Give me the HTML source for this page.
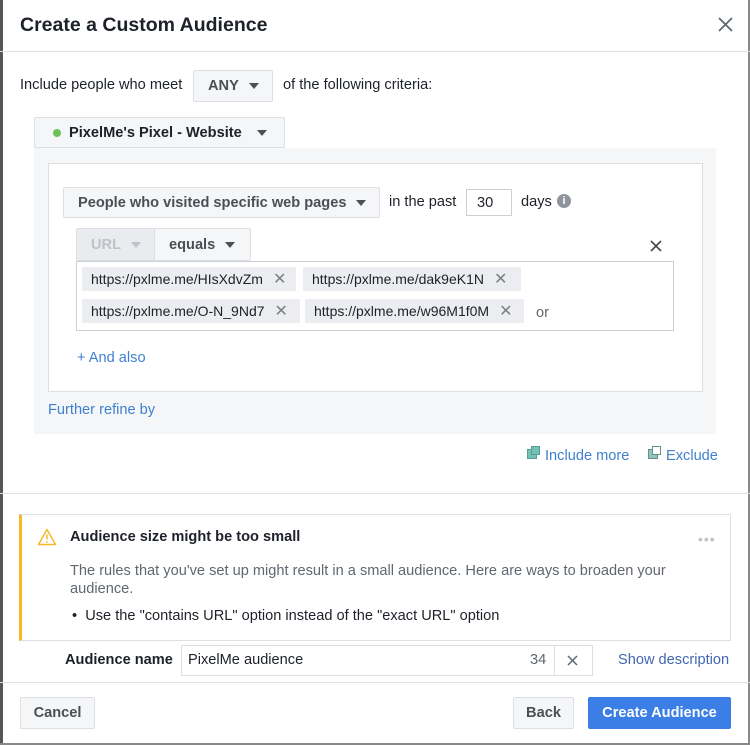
<!DOCTYPE html>
<html><head><meta charset="utf-8"><style>
*{box-sizing:border-box;margin:0;padding:0}
body{width:750px;height:745px;background:#fff;font-family:"Liberation Sans",sans-serif;font-size:14.6px;color:#1d2129;position:relative;overflow:hidden}
.a{position:absolute;white-space:nowrap}
.btn{position:absolute;background:#f5f6f7;border:1px solid #dddfe2;border-radius:2px;font-weight:bold;color:#4b4f56;display:flex;align-items:center}
.tri{display:inline-block;width:0;height:0;border-left:5px solid transparent;border-right:5px solid transparent;border-top:6px solid #4b4f56;margin-left:10px}
.tag{position:absolute;background:#ebedf0;border-radius:2px;height:24px;display:flex;align-items:center;padding-left:9px;color:#1d2129;font-size:14px}
.tag span{color:#7f7f7f;margin-left:10px;font-size:16px}
.blue{color:#4080d0}
</style></head><body>
<div class="a" style="left:0;top:0;width:3px;height:745px;background:#555"></div>
<div class="a" style="right:0;top:0;width:2px;height:745px;background:#888"></div>
<div class="a" style="left:20px;top:14px;font-size:19.5px;font-weight:bold">Create a Custom Audience</div>
<svg class="a" style="left:718px;top:17px" width="15" height="15"><path d="M1 1L14 14M14 1L1 14" stroke="#606770" stroke-width="1.8"/></svg>
<div class="a" style="left:0;top:51px;width:750px;height:1px;background:#dddfe2"></div>

<div class="a" style="left:20px;top:77px;color:#1d2129">Include people who meet</div>
<div class="btn" style="left:193px;top:70px;width:80px;height:32px;padding-left:14px">ANY<i class="tri"></i></div>
<div class="a" style="left:283px;top:77px">of the following criteria:</div>

<div class="btn" style="left:34px;top:117px;width:251px;height:31px;padding-left:18px;color:#1d2129"><i style="width:8px;height:8px;border-radius:50%;background:#6ac259;margin-right:8px;display:inline-block"></i>PixelMe's Pixel - Website<i class="tri" style="margin-left:15px"></i></div>
<div class="a" style="left:34px;top:148px;width:682px;height:286px;background:#f5f6f7"></div>
<div class="a" style="left:48px;top:163px;width:655px;height:229px;background:#fff;border:1px solid #dddfe2"></div>

<div class="btn" style="left:63px;top:187px;width:317px;height:31px;padding-left:14px">People who visited specific web pages<i class="tri" style="margin-left:10px"></i></div>
<div class="a" style="left:389px;top:194px">in the past</div>
<div class="a" style="left:466px;top:189px;width:46px;height:27px;border:1px solid #ccd0d5;padding:5px 0 0 10px">30</div>
<div class="a" style="left:521px;top:194px">days</div>
<div class="a" style="left:557px;top:194px;width:14px;height:14px;border-radius:50%;background:#90949c;color:#fff;font-size:11px;font-weight:bold;text-align:center;line-height:14px">i</div>

<div class="btn" style="left:76px;top:228px;width:175px;height:33px;background:#fff;padding:0"><div style="width:78px;height:31px;background:#e9ebee;color:#bec3c9;display:flex;align-items:center;padding-left:14px;border-right:1px solid #dddfe2">URL<i class="tri" style="border-top-color:#bec3c9"></i></div><div style="padding-left:14px;display:flex;align-items:center;background:#f5f6f7;height:31px;flex:1">equals<i class="tri"></i></div></div>
<svg class="a" style="left:650px;top:240px" width="12" height="12"><path d="M1 1L11 11M11 1L1 11" stroke="#444950" stroke-width="1.6"/></svg>

<div class="a" style="left:76px;top:261px;width:598px;height:70px;border:1px solid #ccd0d5;background:#fff"></div>
<div class="tag" style="left:82px;top:267px;width:214px">https://pxlme.me/HIsXdvZm<span>✕</span></div>
<div class="tag" style="left:303px;top:267px;width:218px">https://pxlme.me/dak9eK1N<span>✕</span></div>
<div class="tag" style="left:82px;top:299px;width:218px">https://pxlme.me/O-N_9Nd7<span>✕</span></div>
<div class="tag" style="left:305px;top:299px;width:219px">https://pxlme.me/w96M1f0M<span>✕</span></div>
<div class="a" style="left:536px;top:305px;color:#606770">or</div>

<div class="a blue" style="left:77px;top:350px">+ And also</div>
<div class="a blue" style="left:48px;top:402px">Further refine by</div>

<div class="a" style="left:527px;top:449px;width:10px;height:10px;background:#6fc2b4;border:1px solid #5a9e93"></div>
<div class="a" style="left:531px;top:446px;width:9px;height:9px;background:#6fc2b4;border:1px solid #5a9e93"></div>
<div class="a blue" style="left:545px;top:448px">Include more</div>
<div class="a" style="left:648px;top:449px;width:10px;height:10px;background:#8fc6bd;border:1px solid #6a8f8a"></div>
<div class="a" style="left:652px;top:446px;width:9px;height:9px;background:#fff;border:1px solid #6a8f8a"></div>
<div class="a blue" style="left:666px;top:448px">Exclude</div>

<div class="a" style="left:0;top:493px;width:750px;height:1px;background:#dddfe2"></div>

<div class="a" style="left:19px;top:514px;width:712px;height:127px;border:1px solid #dddfe2;border-left:3px solid #f7b928"></div>
<svg class="a" style="left:37px;top:528px" width="20" height="18"><path d="M10 1.5L18.5 16.5H1.5Z" fill="none" stroke="#f7b928" stroke-width="1.5" stroke-linejoin="round"/><path d="M10 6.5V11.5" stroke="#f7b928" stroke-width="1.5"/><circle cx="10" cy="14" r="0.9" fill="#f7b928"/></svg>
<div class="a" style="left:70px;top:529px;font-weight:bold">Audience size might be too small</div>
<div class="a" style="left:698px;top:531px;color:#bec3c9;font-size:14px;letter-spacing:1px">•••</div>
<div class="a" style="left:70px;top:562px;color:#606770;line-height:18px;white-space:normal;width:630px">The rules that you've set up might result in a small audience. Here are ways to broaden your audience.</div>
<div class="a" style="left:72px;top:608px;color:#1d2129">•&nbsp;&nbsp;Use the "contains URL" option instead of the "exact URL" option</div>

<div class="a" style="left:65px;top:652px;font-weight:bold">Audience name</div>
<div class="a" style="left:181px;top:645px;width:412px;height:31px;border:1px solid #dddfe2"></div>
<div class="a" style="left:188px;top:652px">PixelMe audience</div>
<div class="a" style="left:530px;top:652px;color:#606770">34</div>
<div class="a" style="left:554px;top:645px;width:1px;height:31px;background:#dddfe2"></div>
<svg class="a" style="left:567px;top:655px" width="11" height="11"><path d="M1 1L10 10M10 1L1 10" stroke="#606770" stroke-width="1.5"/></svg>
<div class="a" style="left:618px;top:652px;color:#4267b2">Show description</div>

<div class="a" style="left:0;top:682px;width:750px;height:1px;background:#dddfe2"></div>
<div class="btn" style="left:20px;top:697px;width:75px;height:32px;justify-content:center">Cancel</div>
<div class="btn" style="left:513px;top:697px;width:61px;height:32px;justify-content:center">Back</div>
<div class="btn" style="left:588px;top:697px;width:143px;height:32px;justify-content:center;background:#3a7ee6;border-color:#3a7ee6;color:#fff">Create Audience</div>
<div class="a" style="left:0;top:743px;width:750px;height:2px;background:#888"></div>
</body></html>
